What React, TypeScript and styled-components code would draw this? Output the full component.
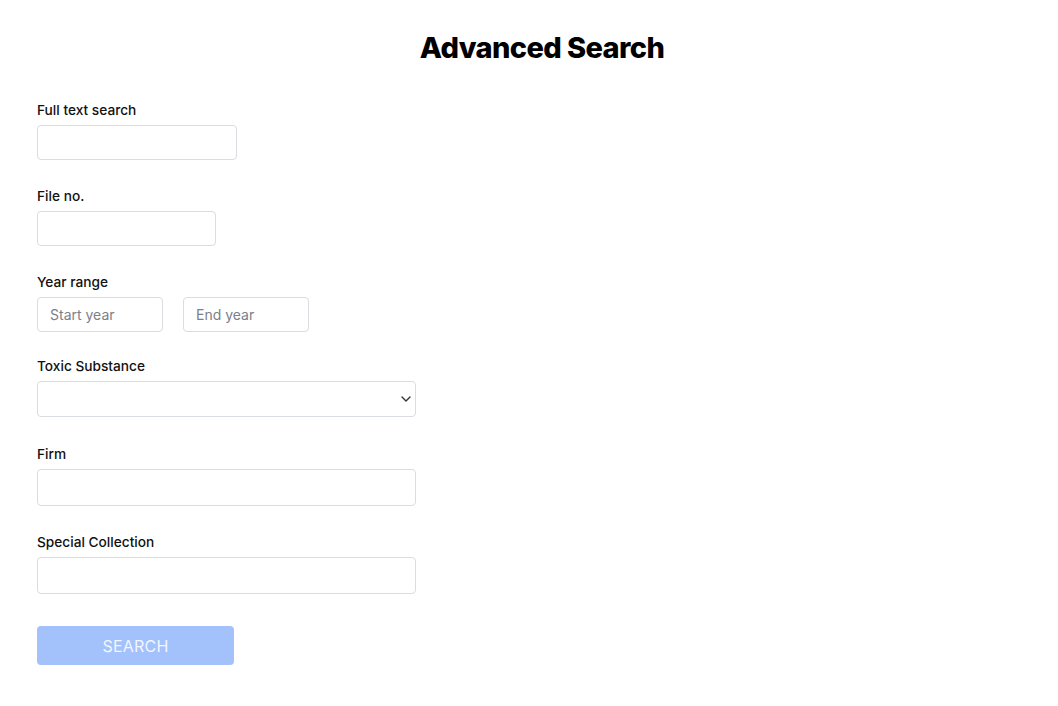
import React from "react";
import styled, { createGlobalStyle } from "styled-components";

const GlobalStyle = createGlobalStyle`
  * { box-sizing: border-box; }
  body {
    margin: 0;
    background: #ffffff;
    font-family: Inter, "Noto Sans", "Liberation Sans", sans-serif;
    color: #111111;
  }
`;

const Page = styled.div`
  padding: 0 37px 40px 37px;
`;

const Title = styled.h1`
  margin: 0;
  padding: 31px 0 0 26px;
  height: 100px;
  text-align: center;
  font-family: Inter, "Liberation Sans", sans-serif;
  font-size: 29px;
  font-weight: 800;
  letter-spacing: -0.6px;
  line-height: 34px;
  color: #000000;
`;

const Form = styled.form`
  display: flex;
  flex-direction: column;
  align-items: flex-start;
`;

const Group = styled.div<{ $gap: number }>`
  display: flex;
  flex-direction: column;
  margin-bottom: ${(p) => p.$gap}px;
`;

const Label = styled.label`
  font-size: 13.7px;
  font-weight: 500;
  line-height: 20px;
  color: #111111;
  margin-bottom: 5px;
`;

const Input = styled.input<{ $width: number; $height: number }>`
  width: ${(p) => p.$width}px;
  height: ${(p) => p.$height}px;
  border: 1px solid #d9dce1;
  border-radius: 4px;
  padding: 0 12px;
  font-family: Inter, "Liberation Sans", sans-serif;
  font-size: 14px;
  color: #111;
  background: #fff;
  outline: none;
  &::placeholder {
    color: #7b8089;
  }
`;

const Row = styled.div`
  display: flex;
  gap: 20px;
`;

const SelectWrap = styled.div`
  position: relative;
  width: 379px;
  height: 36px;
`;

const Select = styled.select`
  appearance: none;
  width: 100%;
  height: 100%;
  border: 1px solid #d9dce1;
  border-radius: 4px;
  background: #fff;
  padding: 0 12px;
  font-family: Inter, "Liberation Sans", sans-serif;
  font-size: 14px;
  outline: none;
`;

const Chevron = styled.svg`
  position: absolute;
  right: 4px;
  top: 13px;
  pointer-events: none;
`;

const Button = styled.button`
  width: 197px;
  height: 39px;
  border: none;
  border-radius: 4px;
  background: #a3c1fb;
  color: #f2f6ff;
  font-family: Inter, "Liberation Sans", sans-serif;
  font-size: 16px;
  font-weight: 400;
  letter-spacing: 0.2px;
`;

export default function App() {
  return (
    <>
      <GlobalStyle />
      <Page>
        <Title>Advanced Search</Title>
        <Form onSubmit={(e) => e.preventDefault()}>
          <Group $gap={26}>
            <Label>Full text search</Label>
            <Input $width={200} $height={35} />
          </Group>
          <Group $gap={26}>
            <Label>File no.</Label>
            <Input $width={179} $height={35} />
          </Group>
          <Group $gap={24}>
            <Label>Year range</Label>
            <Row>
              <Input $width={126} $height={35} placeholder="Start year" />
              <Input $width={126} $height={35} placeholder="End year" />
            </Row>
          </Group>
          <Group $gap={27}>
            <Label>Toxic Substance</Label>
            <SelectWrap>
              <Select defaultValue="">
                <option value=""></option>
              </Select>
              <Chevron width="12" height="10" viewBox="0 0 12 10">
                <path d="M2 3 L6 7 L10 3" fill="none" stroke="#333" strokeWidth="1.4" strokeLinecap="round" strokeLinejoin="round" />
              </Chevron>
            </SelectWrap>
          </Group>
          <Group $gap={26}>
            <Label>Firm</Label>
            <Input $width={379} $height={37} />
          </Group>
          <Group $gap={32}>
            <Label>Special Collection</Label>
            <Input $width={379} $height={37} />
          </Group>
          <Button type="submit" disabled>SEARCH</Button>
        </Form>
      </Page>
    </>
  );
}
